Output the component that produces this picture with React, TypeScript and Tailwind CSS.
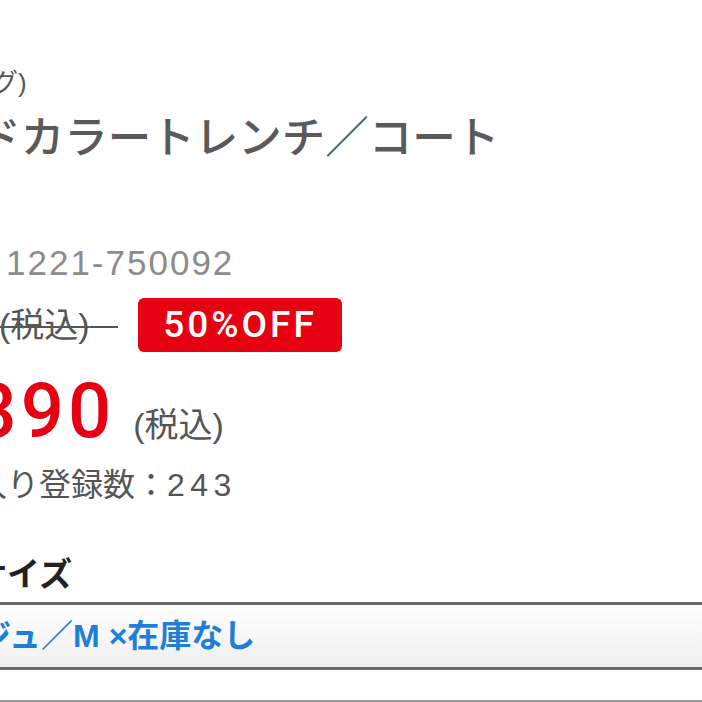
export default function App() {
  const font = { fontFamily: '"Liberation Sans", "Noto Sans CJK JP", sans-serif' }
  const num = { fontFamily: 'Roboto, "Liberation Sans", sans-serif' }
  return (
    <div
      className="w-[702px] h-[702px] overflow-hidden bg-white flex flex-col whitespace-nowrap"
      style={font}
    >
      {/* brand */}
      <div className="mt-[65px] h-[36px] leading-[36px] text-[26px] text-[#555]">
        <span className="inline-block -ml-[138px]">ショッピング)</span>
      </div>

      {/* title */}
      <div className="mt-[14px] h-[46px] leading-[46px] text-[43.5px] font-medium text-[#5a5a5a]">
        <span className="inline-block -ml-[112px]">バンドカラートレンチ／コート</span>
      </div>

      {/* item number */}
      <div className="mt-[82px] h-[40px] leading-[40px] text-[35px] text-[#8c8c8c] tracking-[2px] pl-[6px]">
        1221-750092
      </div>

      {/* original price + badge */}
      <div className="mt-[15px] h-[54px] flex items-center">
        <span className="-ml-[1px] text-[34px] text-[#555] line-through decoration-[2px] decoration-[#555]">
          (税込){"\u00a0\u00a0\u00a0"}
        </span>
        <span
          className="ml-[20px] h-[54px] w-[204px] rounded-[6px] bg-[#e60012] text-white text-[37px] font-medium tracking-[3px] flex items-center justify-center"
          style={num}
        >
          50%OFF
        </span>
      </div>

      {/* sale price */}
      <div className="mt-[24px] h-[70px] flex items-baseline leading-[70px]">
        <span className="-ml-[139px] text-[76px] font-medium tracking-[4px] text-[#e60012]" style={num}>
          ¥6,390
        </span>
        <span className="ml-[18px] text-[34px] text-[#555]">(税込)</span>
      </div>

      {/* favourites */}
      <div className="mt-[19px] h-[40px] leading-[40px] text-[32px] text-[#555]">
        <span className="inline-block -ml-[121px]">
          お気に入り登録数：<span className="tracking-[5.5px]">243</span>
        </span>
      </div>

      {/* size label */}
      <div className="mt-[50px] h-[40px] leading-[40px] text-[33px] font-bold text-[#222]">
        <span className="inline-block -ml-[26px]">サイズ</span>
      </div>

      {/* select */}
      <div className="mt-[7px] h-[68px] -mx-[10px] border-y-[3px] border-[#6a6a6a] bg-gradient-to-b from-white to-[#efefef] flex items-center">
        <span className="-ml-[74px] text-[32px] font-bold text-[#1f7fd8]">
          ベージュ／M ×在庫なし
        </span>
      </div>

      <div className="mt-[30px] h-[2px] bg-[#999]" />
    </div>
  )
}
